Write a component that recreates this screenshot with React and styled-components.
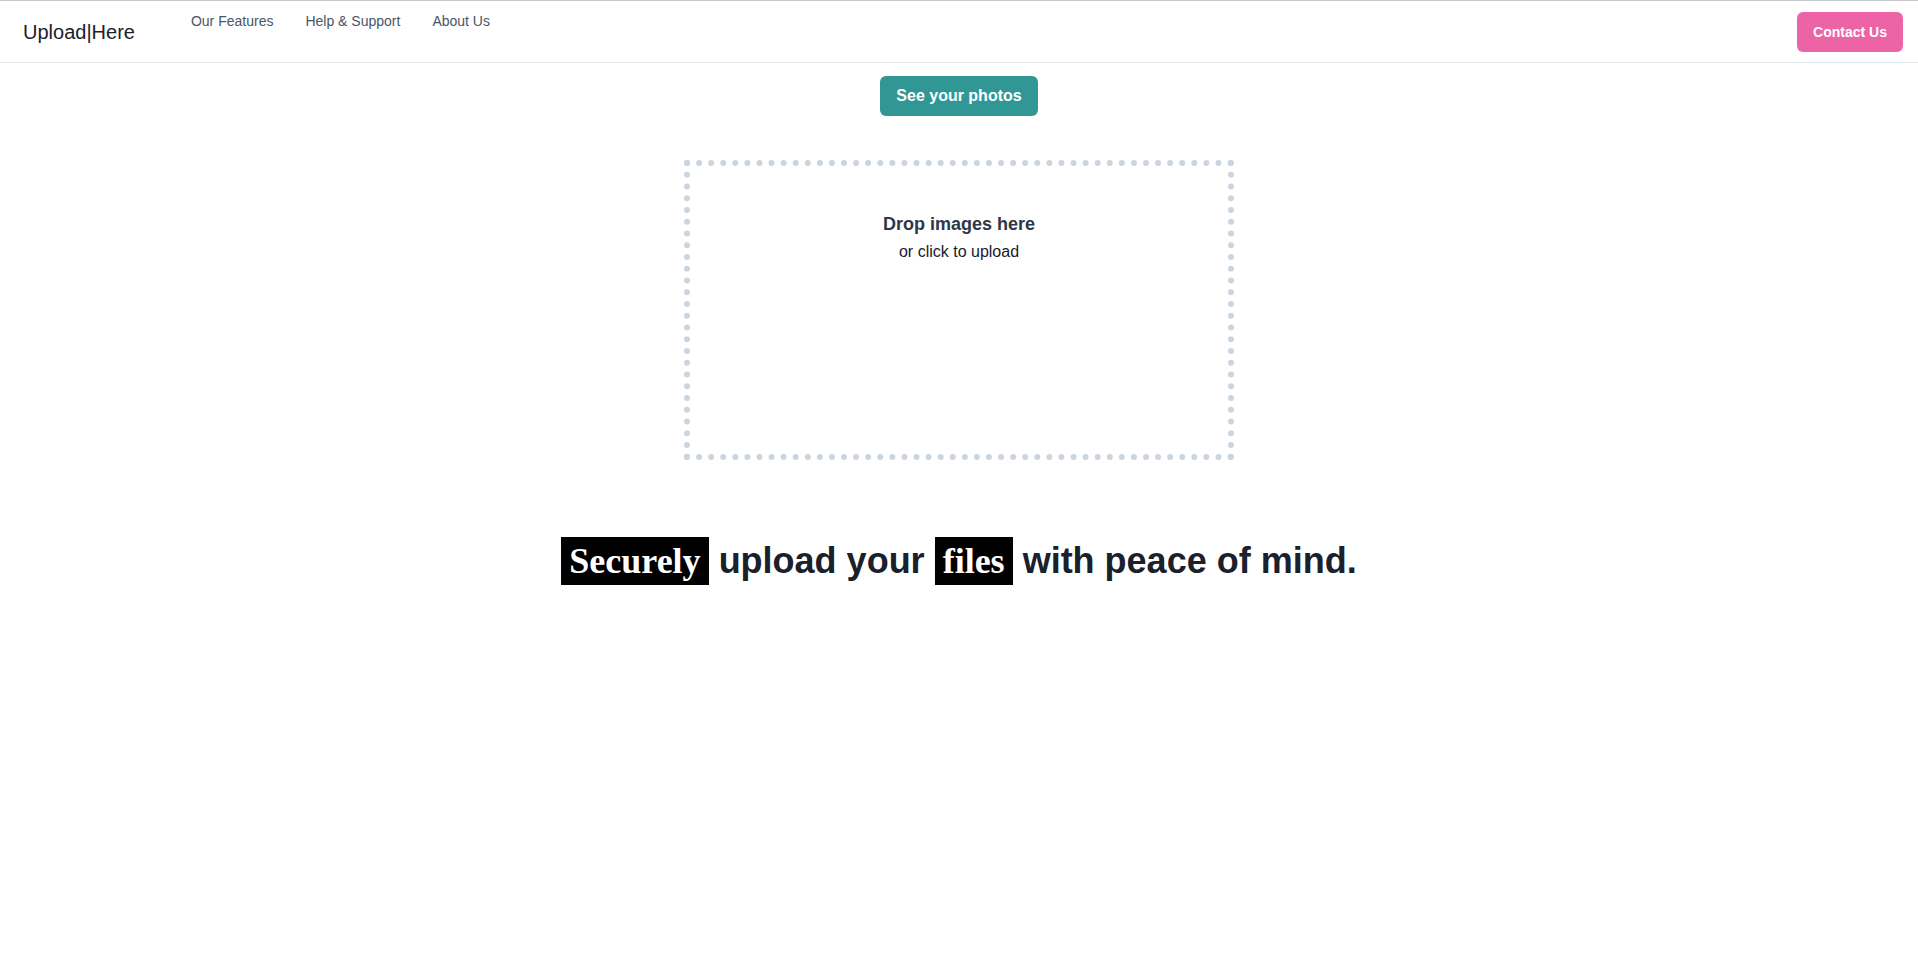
import React from "react";
import styled, { createGlobalStyle } from "styled-components";

const GlobalStyle = createGlobalStyle`
  html, body {
    margin: 0;
    padding: 0;
    background: #ffffff;
    font-family: "Liberation Sans", Arial, sans-serif;
    color: #1a202c;
  }
  * { box-sizing: border-box; }
`;

const Header = styled.header`
  display: flex;
  align-items: center;
  height: 63px;
  padding: 0 15px;
  border-top: 1px solid #c8c8c8;
  border-bottom: 1px solid #e2e8f0;
`;

const Logo = styled.div`
  margin-left: 8px;
  font-size: 20px;
  line-height: 28px;
  color: #1a202c;
  white-space: nowrap;
`;

const Nav = styled.nav`
  align-self: flex-start;
  display: flex;
  gap: 32px;
  margin-left: 56px;
  margin-top: 10px;
`;

const NavLink = styled.a`
  font-size: 14px;
  line-height: 20px;
  color: #4a5568;
  text-decoration: none;
  cursor: pointer;
`;

const Spacer = styled.div`
  flex: 1;
`;

const Button = styled.button`
  border: none;
  border-radius: 6px;
  height: 40px;
  padding: 0 16px;
  font-family: "Liberation Sans", Arial, sans-serif;
  font-weight: 700;
  font-size: ${(p) => (p.$small ? "14px" : "16px")};
  color: #ffffff;
  background: ${(p) => p.$bg};
  cursor: pointer;
`;

const Main = styled.main`
  display: flex;
  flex-direction: column;
  align-items: center;
`;

const PhotosButton = styled(Button)`
  margin-top: 13px;
`;

const DropZone = styled.div`
  margin-top: 44px;
  width: 550px;
  height: 300px;
  border: 6px dotted #cbd5e0;
  padding-top: 44px;
  display: flex;
  flex-direction: column;
  align-items: center;
  cursor: pointer;
`;

const DropTitle = styled.div`
  font-size: 18px;
  line-height: 28px;
  font-weight: 700;
  color: #2d3748;
  margin-bottom: 2px;
`;

const DropSub = styled.div`
  font-size: 16px;
  line-height: 24px;
  color: #1a202c;
`;

const Headline = styled.h1`
  margin: 77px 0 0;
  font-size: 36px;
  line-height: 40px;
  font-weight: 700;
  color: #1a202c;
  text-align: center;
`;

const Mark = styled.span`
  display: inline-block;
  background: #000000;
  color: #ffffff;
  font-family: "Liberation Serif", "Times New Roman", serif;
  line-height: 40px;
  padding: 4px 8px;
`;

export default function App() {
  return (
    <>
      <GlobalStyle />
      <Header>
        <Logo>Upload|Here</Logo>
        <Nav>
          <NavLink>Our Features</NavLink>
          <NavLink>Help &amp; Support</NavLink>
          <NavLink>About Us</NavLink>
        </Nav>
        <Spacer />
        <Button $small $bg="#ed64a6">Contact Us</Button>
      </Header>
      <Main>
        <PhotosButton $bg="#319795">See your photos</PhotosButton>
        <DropZone>
          <DropTitle>Drop images here</DropTitle>
          <DropSub>or click to upload</DropSub>
        </DropZone>
        <Headline>
          <Mark>Securely</Mark> upload your <Mark>files</Mark> with peace of mind.
        </Headline>
      </Main>
    </>
  );
}
